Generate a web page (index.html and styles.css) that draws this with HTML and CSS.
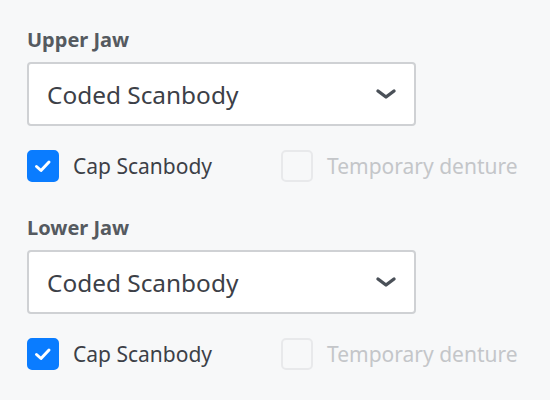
FILE: index.html
```html
<!DOCTYPE html>
<html lang="en">
<head>
    <meta charset="UTF-8">
    <title>Scanbody Options</title>
    <link rel="stylesheet" href="styles.css">
</head>
<body>
    <div class="jaw-section">
        <div class="jaw-label">Upper Jaw</div>
        <div class="select-box">
            <span class="select-value">Coded Scanbody</span>
            <svg class="chevron" width="22" height="12" viewBox="0 0 22 12"><path d="M3 3 L11 9 L19 3" fill="none" stroke="#4a5058" stroke-width="3.4" stroke-linecap="round" stroke-linejoin="round"/></svg>
        </div>
        <div class="options">
            <label class="option">
                <span class="checkbox checked">
                    <svg width="20" height="16" viewBox="0 0 20 16"><path d="M3.5 8.5 L8 12.5 L16 4" fill="none" stroke="#fff" stroke-width="3" stroke-linecap="round" stroke-linejoin="round"/></svg>
                </span>
                <span class="option-text">Cap Scanbody</span>
            </label>
            <label class="option disabled">
                <span class="checkbox"></span>
                <span class="option-text">Temporary denture</span>
            </label>
        </div>
    </div>

    <div class="jaw-section">
        <div class="jaw-label">Lower Jaw</div>
        <div class="select-box">
            <span class="select-value">Coded Scanbody</span>
            <svg class="chevron" width="22" height="12" viewBox="0 0 22 12"><path d="M3 3 L11 9 L19 3" fill="none" stroke="#4a5058" stroke-width="3.4" stroke-linecap="round" stroke-linejoin="round"/></svg>
        </div>
        <div class="options">
            <label class="option">
                <span class="checkbox checked">
                    <svg width="20" height="16" viewBox="0 0 20 16"><path d="M3.5 8.5 L8 12.5 L16 4" fill="none" stroke="#fff" stroke-width="3" stroke-linecap="round" stroke-linejoin="round"/></svg>
                </span>
                <span class="option-text">Cap Scanbody</span>
            </label>
            <label class="option disabled">
                <span class="checkbox"></span>
                <span class="option-text">Temporary denture</span>
            </label>
        </div>
    </div>
</body>
</html>
```

FILE: styles.css
```css
/* Scanbody options panel */
body {
    margin: 0;
    padding: 28px 0 0 27px;
    background-color: #f7f8f9;
    font-family: "Noto Sans", "Open Sans", sans-serif;
    color: #3c4047;
}

.jaw-section {
    margin-bottom: 34px;
}

.jaw-label {
    font-size: 20px;
    font-weight: bold;
    color: #555a60;
    line-height: 24px;
    margin-bottom: 10px;
}

.select-box {
    box-sizing: border-box;
    width: 389px;
    height: 64px;
    background-color: #fff;
    border: 2px solid #cfd1d4;
    border-radius: 4px;
    display: flex;
    align-items: center;
    justify-content: space-between;
    padding: 0 17px 0 18px;
}

.select-value {
    font-size: 24.4px;
    color: #3c4047;
}

.chevron {
    display: block;
}

.options {
    display: flex;
    margin-top: 24px;
}

.option {
    display: flex;
    align-items: center;
    gap: 14px;
    width: 254px;
}

.checkbox {
    box-sizing: border-box;
    width: 32px;
    height: 32px;
    border-radius: 5px;
    border: 2px solid #e8e9eb;
    background-color: #f7f8f9;
    display: flex;
    align-items: center;
    justify-content: center;
}

.checkbox.checked {
    background-color: #0a7cff;
    border-color: #0a7cff;
}

.option-text {
    font-size: 21px;
    color: #3c4047;
}

.option.disabled .option-text {
    color: #c4c6c9;
}
```
